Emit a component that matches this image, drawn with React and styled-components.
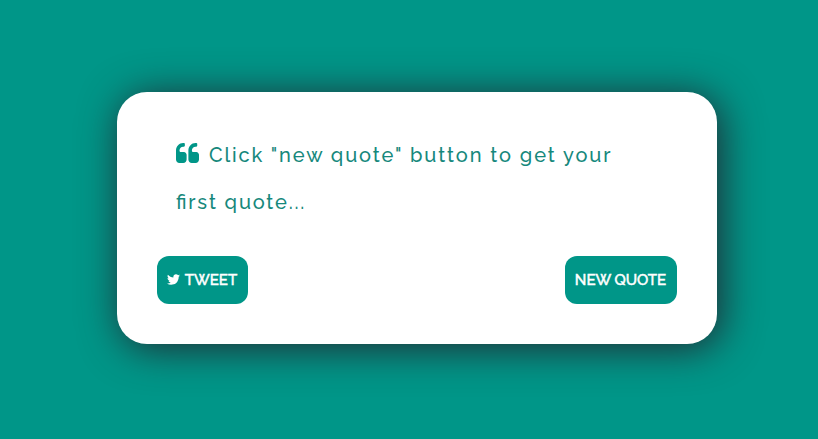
import React from "react";
import styled, { createGlobalStyle } from "styled-components";

const GlobalStyle = createGlobalStyle`
  * { box-sizing: border-box; }
  body {
    margin: 0;
    background: #009688;
    font-family: Raleway, Lato, sans-serif;
    overflow: hidden;
  }
`;

const Page = styled.main`
  height: 439px;
  padding: 92px 101px 0 117px;
`;

const Card = styled.section`
  width: 600px;
  height: 252px;
  padding: 40px;
  border-radius: 30px;
  background: #fff;
  box-shadow: 4px 4px 40px 0 #222831;
  display: flex;
  flex-direction: column;
  justify-content: space-between;
`;

const Quote = styled.p`
  margin: 0;
  padding: 0 19px;
  color: #16887c;
  font-size: 20px;
  font-weight: 500;
  line-height: 47px;
  letter-spacing: 1.87px;
  font-feature-settings: "liga" 1;
`;

const Line = styled.span`
  display: block;
  height: 47px;
  white-space: nowrap;
  letter-spacing: ${(p) => p.$spacing};
`;

const QuoteMark = styled.svg`
  width: 23px;
  height: 20px;
  margin-right: 10px;
  vertical-align: -1px;
  fill: #009688;
`;

const Bird = styled.svg`
  width: 13px;
  height: 11px;
  fill: #fff;
`;

const Actions = styled.div`
  display: flex;
  justify-content: space-between;
`;

const Button = styled.button`
  width: ${(p) => p.$width}px;
  height: 48px;
  padding: 0 1px 1px 0;
  border: 0;
  border-radius: 12px;
  background: #009688;
  color: #fff;
  font: 500 15px Raleway, Lato, sans-serif;
  -webkit-text-stroke: 0.5px #fff;
  display: flex;
  align-items: center;
  justify-content: center;
  gap: 5px;
`;

export default function App() {
  return (
    <>
      <GlobalStyle />
      <Page>
        <Card>
          <Quote>
            <Line>
              <QuoteMark viewBox="0 128 1664 1408" preserveAspectRatio="none">
                <path d="M768 960v336q0 100-70 170t-170 70H240q-100 0-170-70T0 1296V640q0-104 40.500-198.500T150 278t163.500-109.500T512 128h64q26 0 45 19t19 45v128q0 26-19 45t-45 19h-64q-106 0-181 75t-75 181v32q0 40 28 68t68 28h224q80 0 136 56t56 136zm896 0v336q0 100-70 170t-170 70h-288q-100 0-170-70t-70-170V640q0-104 40.500-198.500T1046 278t163.500-109.500T1408 128h64q26 0 45 19t19 45v128q0 26-19 45t-45 19h-64q-106 0-181 75t-75 181v32q0 40 28 68t68 28h224q80 0 136 56t56 136z" />
              </QuoteMark>
              Click "new quote" button to get your
            </Line>
            <Line $spacing="1.8px">first quote...</Line>
          </Quote>
          <Actions>
            <Button $width={91}>
              <Bird viewBox="44 256 1576 1280">
                <path d="M1620 408q-67 98-162 167 1 14 1 42 0 130-38 259.500T1305.500 1125 1121 1335.500t-258 146-323 54.500q-271 0-496-145 35 4 78 4 225 0 401-138-105-2-188-64.500T221 1033q33 5 61 5 43 0 85-11-112-23-185.500-111.500T108 710v-4q68 38 146 41-66-44-105-115t-39-154q0-88 44-163 121 149 294.500 238.500T820 653q-8-38-8-74 0-134 94.500-228.500T1135 256q140 0 236 102 109-21 205-78-37 115-142 178 93-10 186-50z" />
              </Bird>
              TWEET
            </Button>
            <Button $width={112}>NEW QUOTE</Button>
          </Actions>
        </Card>
      </Page>
    </>
  );
}
